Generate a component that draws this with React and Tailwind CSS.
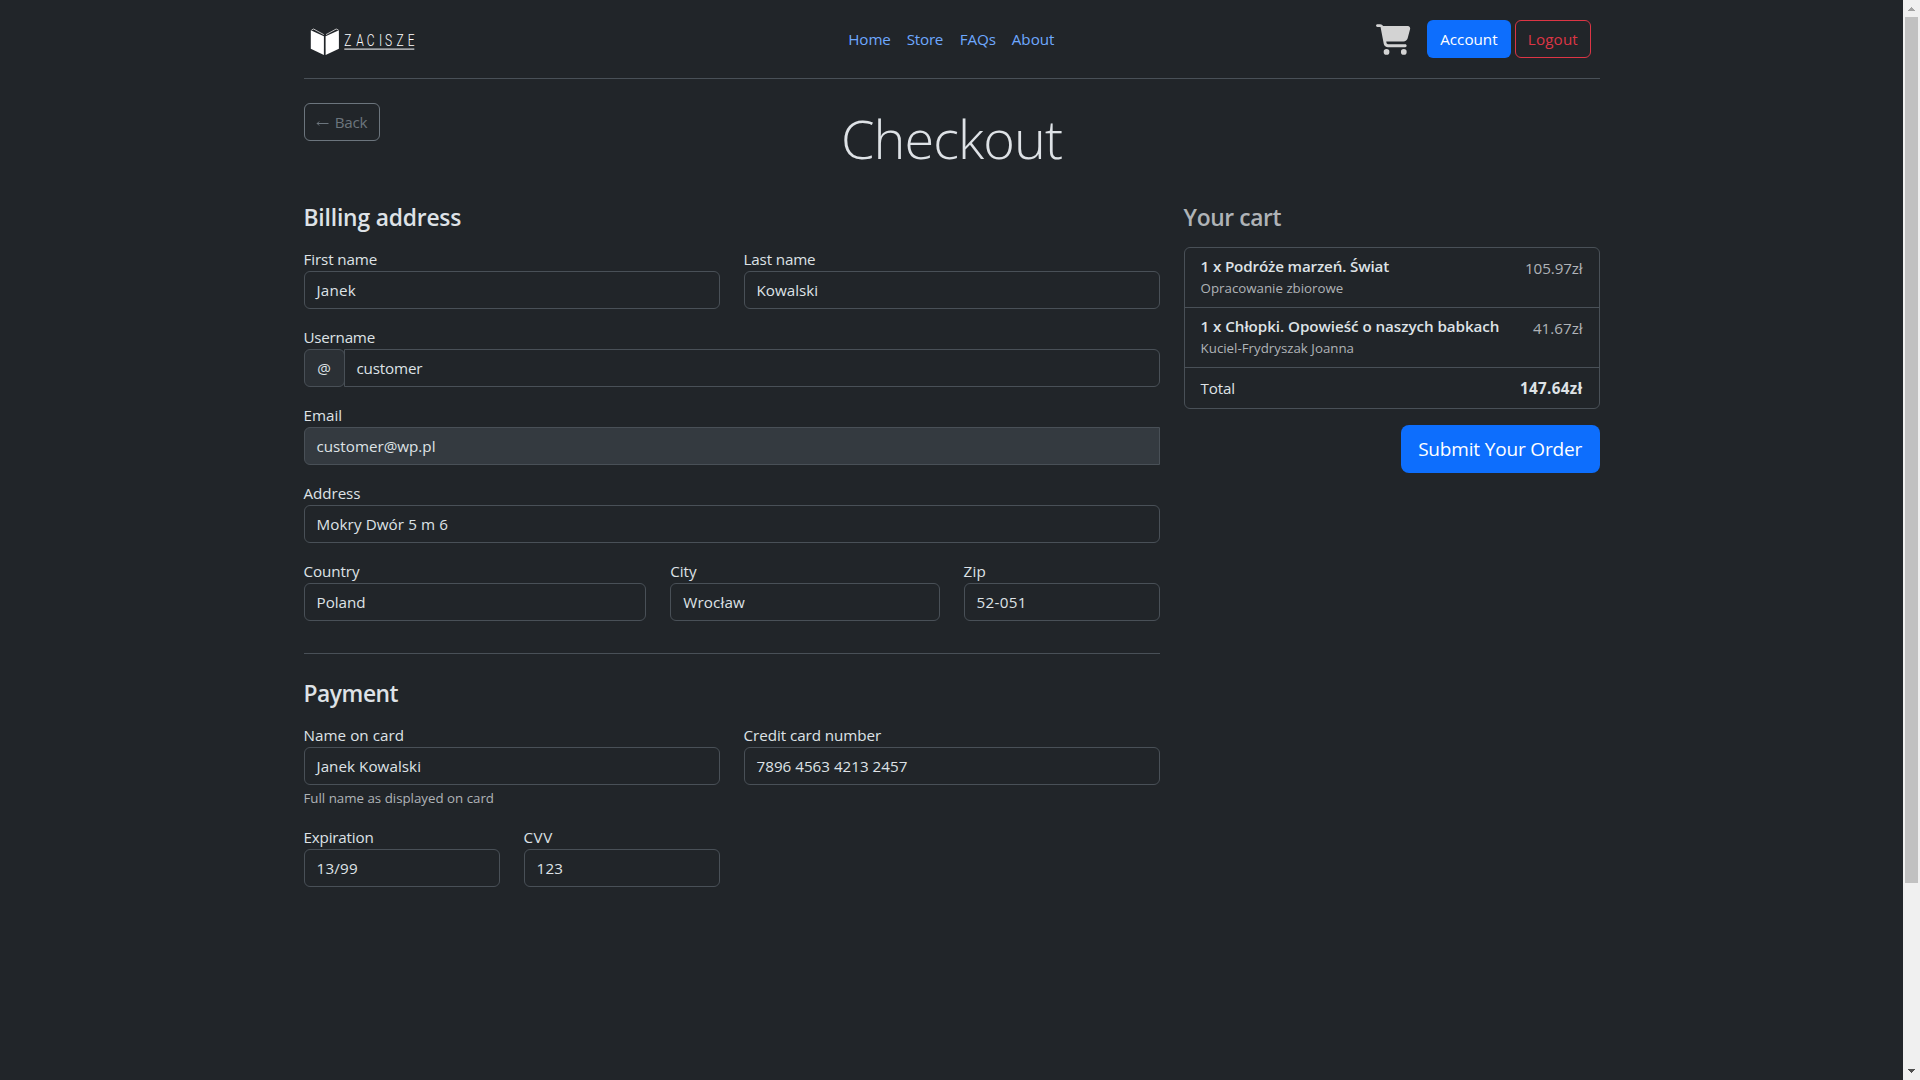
import { FaCartShopping } from "react-icons/fa6";

function Logo() {
  return (
    <svg width="112" height="36" viewBox="306 24 112 36" aria-label="Zacisze">
      <g fill="#fff">
        <path d="M310.8 30.2 323.9 36.2V54.9L310.8 48.8Z" />
        <path d="M338.9 30.2 325.6 36.2V54.9L338.9 48.8Z" />
      </g>
      <g fill="none" stroke="#e4e4e4" strokeWidth="0.8">
        <path d="M311.6 30 313.6 29 323.8 34.6" />
        <path d="M338.4 30 336.2 29 326 34.6" />
      </g>
      <text
        transform="translate(344.2 46) scale(0.75 1)"
        x="0 16.1 30.2 46.5 54.5 69.8 84.6"
        y="0"
        fill="#fff"
        fontFamily="Roboto, sans-serif"
        fontWeight="350"
        fontSize="16"
      >
        ZACISZE
      </text>
      <rect x="344.3" y="48.4" width="70" height="1.5" fill="#b4b6b8" />
    </svg>
  );
}

function Field({ label, value, span, labelClass = "", inputClass = "", hint, prefix, disabled }) {
  return (
    <div className={span}>
      <label className={`block h-6 leading-6 ${labelClass}`}>{label}</label>
      <div className="flex h-[38px]">
        {prefix && (
          <span className="flex w-[41px] items-center justify-center rounded-md border border-[#495057] bg-[#2b3035]">
            {prefix}
          </span>
        )}
        <input
          defaultValue={value}
          disabled={disabled}
          className={`h-full w-full min-w-0 flex-1 border border-[#495057] pl-[9px] pr-3 indent-[3px] text-[#dee2e6] outline-none ${
            disabled ? "rounded-l-md bg-[#343a40]" : prefix ? "-ml-px rounded-r-md bg-[#212529]" : "rounded-md bg-[#212529]"
          } ${inputClass}`}
        />
      </div>
      {hint && <small className="block h-6 text-[13.3px] leading-[27px] text-[#afb3b7]">{hint}</small>}
    </div>
  );
}

function CartItem({ title, author, price, titleClass, authorClass = "", priceClass = "" }) {
  return (
    <li className="flex h-[60px] justify-between border-b border-[#495057] px-4 pt-2">
      <div>
        <h6 className={`h-[21px] font-semibold leading-[20px] ${titleClass}`}>{title}</h6>
        <small className={`block text-[13.3px] leading-[22px] text-[#afb3b7] ${authorClass}`}>{author}</small>
      </div>
      <span className={`leading-6 text-[#afb3b7] ${priceClass}`}>{price}</span>
    </li>
  );
}

function Scrollbar() {
  return (
    <div className="flex w-[17px] flex-col items-center bg-[#f0f0f0]">
      <svg className="h-[17px] w-[17px] shrink-0" viewBox="0 0 17 17" shapeRendering="crispEdges">
        <path d="M8 7h1v1H8zM7 8h3v1H7zM6 9h5v1H6zM5 10h7v1H5z" fill="#a3a3a3" />
      </svg>
      <div className="h-[866px] w-[13px] bg-[#c1c1c1]" />
      <svg className="mt-auto h-[17px] w-[17px] shrink-0" viewBox="0 0 17 17" shapeRendering="crispEdges">
        <path d="M5 6h7v1H5zM6 7h5v1H6zM7 8h3v1H7zM8 9h1v1H8z" fill="#505050" />
      </svg>
    </div>
  );
}

export default function App() {
  return (
    <div className="flex h-[1080px] w-[1920px] overflow-hidden bg-[#212529] font-['Open_Sans',sans-serif] text-[15.2px] text-[#dee2e6]">
      <div className="flex-1">
        <div className="mx-auto w-[1320px] px-3">
          <header className="grid h-[79px] grid-cols-[1fr_auto_1fr] border-b border-[#495057] pt-5">
            <div className="pl-[2.5px] pt-1">
              <Logo />
            </div>
            <nav className="flex h-[38px] items-center pl-px text-[#6ea8fe]">
              <a className="w-[58.5px] pl-2 tracking-[-0.1px]">Home</a>
              <a className="w-[53px] pl-2 tracking-[-0.25px]">Store</a>
              <a className="w-[52px] pl-2 tracking-[-0.1px]">FAQs</a>
              <a className="w-[60px] pl-2">About</a>
            </nav>
            <div className="flex h-[38px] justify-end pr-[8.6px]">
              <FaCartShopping className="mr-[16.4px] mt-1 h-[31px] w-[34.5px] text-[#d3d3d3]" />
              <button className="mr-1 w-[84px] rounded-md bg-[#0d6efd] text-white">Account</button>
              <button className="w-[76px] rounded-md border border-[#dc3545] tracking-[0.15px] text-[#dc3545]">Logout</button>
            </div>
          </header>

          <div className="mt-6 grid h-[99px] grid-cols-[1fr_auto_1fr] items-start">
            <button className="flex h-[38px] w-[76px] items-center justify-center gap-[6px] rounded-md border border-[#6c757d] tracking-[-0.2px] text-[#6c757d]">
              <svg className="mt-[3px]" width="13" height="7" viewBox="0 0 13 7" fill="none" stroke="currentColor">
                <path d="M1 3.5H12.5M3.2 1.5 1.2 3.5 3.2 5.5" />
              </svg>
              Back
            </button>
            <h1 className="text-[54px] font-light leading-[70px] tracking-[-0.9px]">Checkout</h1>
          </div>

          <main className="flex items-start gap-6">
            <form className="w-[856.1px] shrink-0">
              <h4 className="mb-4 h-[29px] text-[22.8px] font-semibold leading-[31px] tracking-[-0.17px]">Billing address</h4>
              <div className="grid grid-cols-12 gap-x-6 gap-y-4">
                <Field span="col-span-6" label="First name" value="Janek" labelClass="tracking-[-0.12px]" inputClass="tracking-[0.2px]" />
                <Field span="col-span-6" label="Last name" value="Kowalski" labelClass="tracking-[-0.15px]" />
                <Field span="col-span-12" label="Username" value="customer" prefix="@" labelClass="tracking-[-0.24px]" inputClass="tracking-[-0.17px]" />
                <Field span="col-span-12" label="Email" value="customer@wp.pl" disabled />
                <Field span="col-span-12" label="Address" value="Mokry Dwór 5 m 6" labelClass="tracking-[-0.06px]" inputClass="tracking-[0.1px]" />
                <Field span="col-span-5" label="Country" value="Poland" labelClass="tracking-[-0.08px]" />
                <Field span="col-span-4" label="City" value="Wrocław" inputClass="tracking-[0.15px]" />
                <Field span="col-span-3" label="Zip" value="52-051" labelClass="tracking-[0.2px]" inputClass="tracking-[0.3px]" />
              </div>
              <hr className="mb-6 mt-8 border-[#495057]" />
              <h4 className="mb-4 h-[29px] text-[22.8px] font-semibold leading-[31px] tracking-[-0.45px]">Payment</h4>
              <div className="grid grid-cols-12 gap-x-6 gap-y-4">
                <Field span="col-span-6" label="Name on card" value="Janek Kowalski" hint="Full name as displayed on card" labelClass="tracking-[0.05px]" inputClass="tracking-[0.05px]" />
                <Field span="col-span-6" label="Credit card number" value="7896 4563 4213 2457" labelClass="tracking-[-0.06px]" />
                <Field span="col-span-3" label="Expiration" value="13/99" labelClass="tracking-[-0.18px]" inputClass="tracking-[0.2px]" />
                <Field span="col-span-3" label="CVV" value="123" labelClass="tracking-[0.5px]" inputClass="tracking-[0.2px]" />
              </div>
            </form>

            <aside className="w-[416px] shrink-0">
              <h4 className="mb-4 h-[29px] text-[22.8px] font-semibold leading-[31px] tracking-[-0.4px] text-[#afb3b7]">Your cart</h4>
              <ul className="mb-4 rounded-md border border-[#495057]">
                <CartItem title="1 x Podróże marzeń. Świat" author="Opracowanie zbiorowe" price="105.97zł" titleClass="tracking-[-0.15px]" priceClass="tracking-[-0.1px]" />
                <CartItem title="1 x Chłopki. Opowieść o naszych babkach" author="Kuciel-Frydryszak Joanna" price="41.67zł" titleClass="tracking-[-0.06px]" />
                <li className="flex h-10 items-center justify-between px-4">
                  <span className="tracking-[-0.2px]">Total</span>
                  <strong className="font-bold tracking-[0.35px]">147.64zł</strong>
                </li>
              </ul>
              <button className="ml-auto block h-12 w-[199px] rounded-lg bg-[#0d6efd] pt-px text-[19px] tracking-[-0.17px] text-white">
                Submit Your Order
              </button>
            </aside>
          </main>
        </div>
      </div>
      <Scrollbar />
    </div>
  );
}
